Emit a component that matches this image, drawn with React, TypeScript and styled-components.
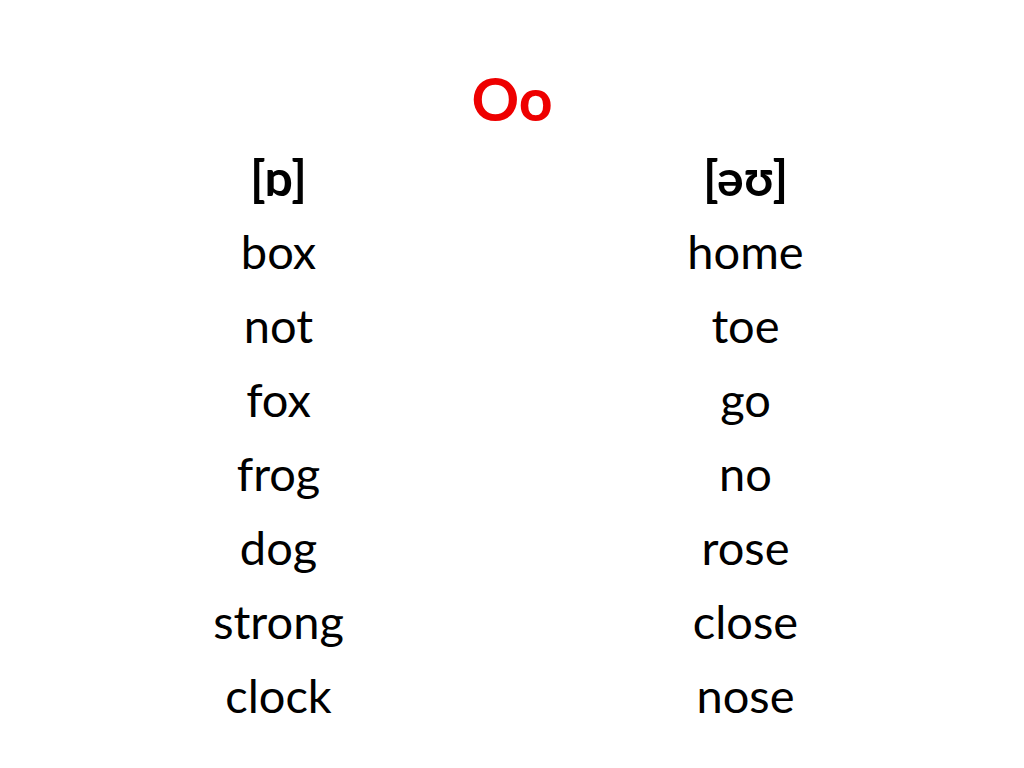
import styled, { createGlobalStyle } from 'styled-components';

const GlobalStyle = createGlobalStyle`
  html, body {
    margin: 0;
    padding: 0;
    background: #ffffff;
  }
  body {
    font-family: Lato, "Noto Sans", "DejaVu Sans", sans-serif;
  }
`;

const Slide = styled.main`
  width: 1024px;
  height: 768px;
  box-sizing: border-box;
  padding-top: 58px;
  display: flex;
  flex-direction: column;
  align-items: center;
  color: #000000;
`;

const Title = styled.h1`
  margin: 0;
  height: 82px;
  line-height: 82px;
  font-size: 59px;
  font-weight: 700;
  color: #ee0000;
`;

const Columns = styled.div`
  display: grid;
  grid-template-columns: 467px 467px;
`;

const Column = styled.ul`
  list-style: none;
  margin: 0;
  padding: 0;
  display: flex;
  flex-direction: column;
  align-items: center;
`;

const Row = styled.li<{ $bold?: boolean }>`
  height: 74px;
  line-height: 74px;
  font-size: ${(p) => (p.$bold ? 50 : 47)}px;
  font-weight: ${(p) => (p.$bold ? 700 : 400)};
`;

const short = ['box', 'not', 'fox', 'frog', 'dog', 'strong', 'clock'];
const long = ['home', 'toe', 'go', 'no', 'rose', 'close', 'nose'];

export default function App() {
  return (
    <>
      <GlobalStyle />
      <Slide>
        <Title>Oo</Title>
        <Columns>
          <Column>
            <Row $bold>[ɒ]</Row>
            {short.map((w) => (
              <Row key={w}>{w}</Row>
            ))}
          </Column>
          <Column>
            <Row $bold>[əʊ]</Row>
            {long.map((w) => (
              <Row key={w}>{w}</Row>
            ))}
          </Column>
        </Columns>
      </Slide>
    </>
  );
}
